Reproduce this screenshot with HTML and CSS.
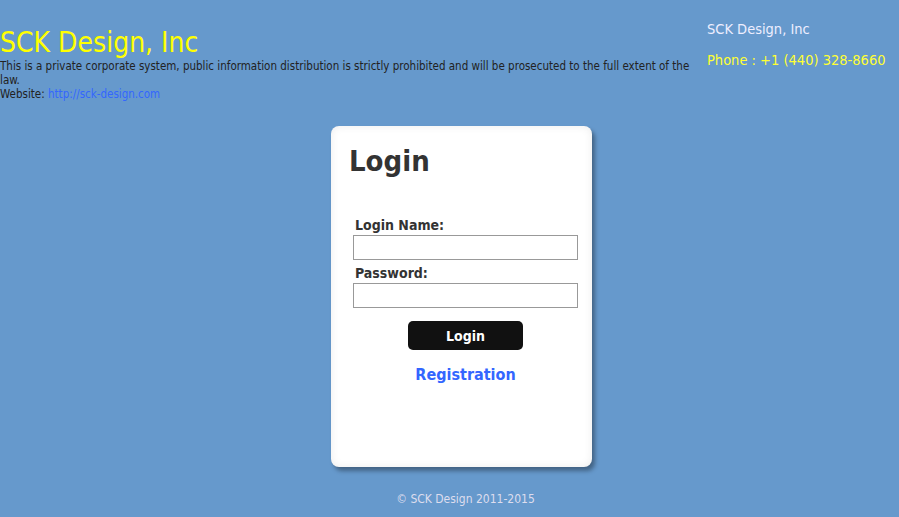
FILE: index.html
```html
<!DOCTYPE html>
<html lang="en">
<head>
  <meta charset="UTF-8" />
  <meta name="viewport" content="width=device-width, initial-scale=1.0"/>
  <title>SCK Design, Inc - Login</title>
  <link rel="stylesheet" href="styles.css">
</head>
<body>
  <div class="top">
    <div class="brand">
      <h1>SCK Design, Inc</h1>
      <p>This is a private corporate system, public information distribution is strictly prohibited and will be prosecuted to the full extent of the law.</p>
      <p>Website: <a href="#">http://sck-design.com</a></p>
    </div>
    <div class="contact">
      <p>SCK Design, Inc</p>
      <p class="phone">Phone : +1 (440) 328-8660</p>
    </div>
  </div>

  <div class="main">
    <div class="card">
      <h2>Login</h2>
      <form class="login-form" onsubmit="return false;">
        <label for="loginName">Login Name:</label>
        <input type="text" id="loginName" />
        <label for="password">Password:</label>
        <input type="password" id="password" />
        <div class="actions">
          <button type="submit">Login</button>
          <a href="#" class="register">Registration</a>
        </div>
      </form>
    </div>
  </div>

  <div class="footer">&copy; SCK Design 2011-2015</div>
</body>
</html>
```

FILE: styles.css
```css
body {
  margin: 0;
  font-family: "DejaVu Sans Condensed", "DejaVu Sans", sans-serif;
  font-stretch: condensed;
  background: #6699cc;
  color: #222;
}

.top {
  display: flex;
}

.brand {
  width: 690px;
}

.brand h1 {
  margin: 27px 0 0;
  font-size: 28px;
  line-height: 32px;
  font-weight: normal;
  color: #ffff00;
}

.brand p {
  margin: 0;
  font-size: 11.5px;
  line-height: 14px;
}

.brand a {
  color: #3366ff;
  text-decoration: none;
}

.contact {
  padding-left: 17px;
  padding-top: 20px;
  font-size: 14.5px;
  line-height: 18px;
}

.contact p {
  margin: 0;
  color: #eef;
}

.contact .phone {
  margin-top: 13px;
  color: #ffff33;
}

.main {
  display: flex;
  justify-content: center;
  padding-left: 24px;
  margin-top: 25px;
}

.card {
  width: 261px;
  height: 341px;
  box-sizing: border-box;
  padding: 18px 18px 0;
  background: #fff;
  border-radius: 8px;
  box-shadow: inset 0 0 8px rgba(0,0,0,0.08), 3px 4px 4px rgba(0,0,0,0.35);
}

.card h2 {
  margin: 0;
  font-size: 29px;
  line-height: 34px;
  color: #333;
}

.login-form {
  padding: 39px 0 0 4px;
}

.login-form label {
  display: block;
  margin-left: 2px;
  font-size: 14px;
  line-height: 17px;
  font-weight: bold;
  color: #333;
}

.login-form input {
  display: block;
  width: 225px;
  height: 25px;
  box-sizing: border-box;
  margin: 1px 0 5px;
  border: 1px solid #999;
  padding: 2px 4px;
  outline: none;
}

.actions {
  display: flex;
  flex-direction: column;
  align-items: center;
  width: 225px;
  margin-top: 13px;
}

.actions button {
  width: 115px;
  height: 29px;
  background: #111;
  color: #fff;
  border: none;
  border-radius: 5px;
  font-family: inherit;
  font-stretch: condensed;
  font-size: 14px;
  font-weight: bold;
  cursor: pointer;
}

.register {
  margin-top: 15px;
  font-size: 16px;
  line-height: 20px;
  font-weight: bold;
  color: #3366ff;
  text-decoration: none;
}

.footer {
  margin-top: 25px;
  padding-left: 32px;
  text-align: center;
  font-size: 12px;
  line-height: 14px;
  color: #dde;
}
```
